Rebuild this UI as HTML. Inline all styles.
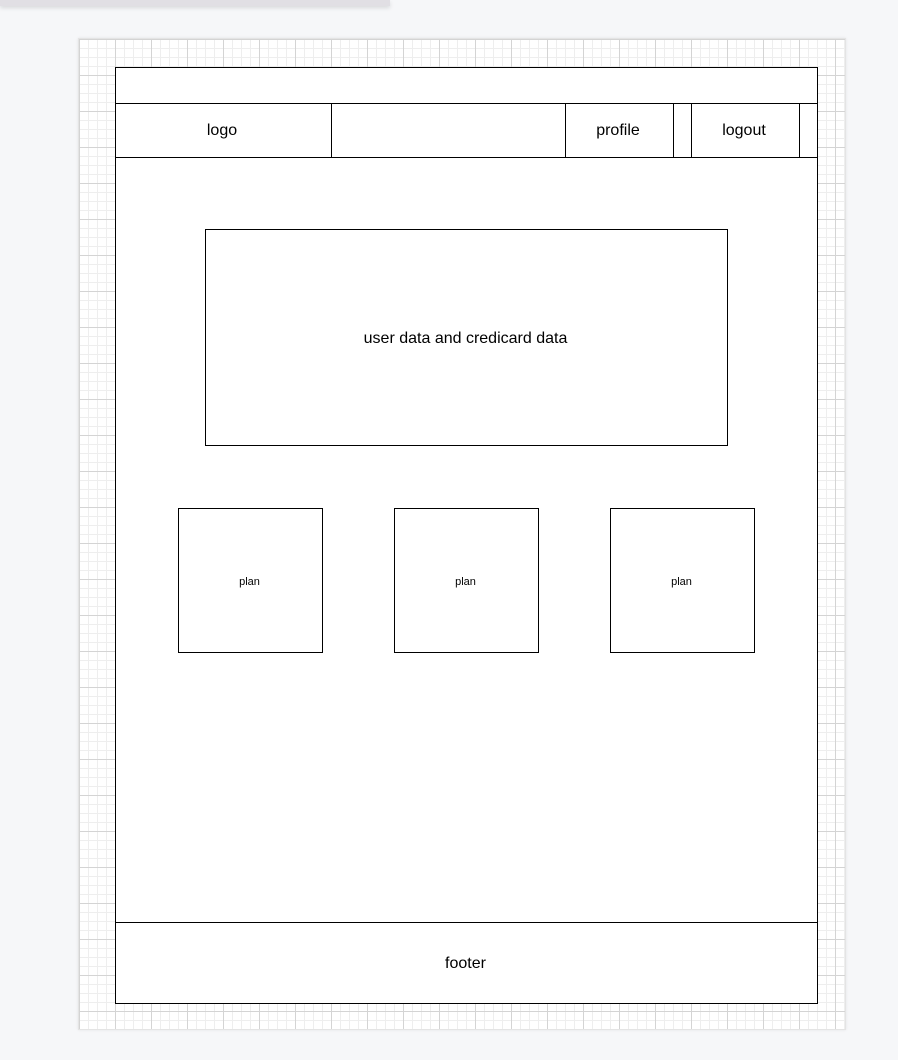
<!DOCTYPE html>
<html><head><style>
body{margin:0;width:898px;height:1060px;background:#f6f7f9;position:relative;overflow:hidden;font-family:"Liberation Sans",Arial,sans-serif;color:#000}
.a{position:absolute;box-sizing:border-box}
.topbar{left:0;top:0;width:390px;height:6px;background:#e1dfe4;box-shadow:0 2px 4px rgba(0,0,0,.12)}
.canvas{left:78px;top:38px;width:768px;height:992px;background-color:#fff;
background-image:linear-gradient(#d4d4d4 1px,transparent 1px),linear-gradient(90deg,#d4d4d4 1px,transparent 1px),linear-gradient(#eeeeee 1px,transparent 1px),linear-gradient(90deg,#eeeeee 1px,transparent 1px);
background-size:36px 36px,36px 36px,9px 9px,9px 9px;background-position:0 0,0 0,0 0,0 0;
border:1px solid #e4e4e4;box-shadow:0 0 3px rgba(0,0,0,.08)}
.b{border:1px solid #000;background:#fff}
.l{background:#000}
.t{display:flex;align-items:center;justify-content:center;font-size:16px;padding-top:2px}
</style></head><body>
<div class="a topbar"></div>
<div class="a canvas"></div>
<div class="a b" style="left:115px;top:67px;width:703px;height:937px"></div>
<div class="a l" style="left:115px;top:103px;width:703px;height:1px"></div>
<div class="a l" style="left:115px;top:157px;width:703px;height:1px"></div>
<div class="a l" style="left:115px;top:922px;width:703px;height:1px"></div>
<div class="a l" style="left:331px;top:103px;width:1px;height:55px"></div>
<div class="a l" style="left:565px;top:103px;width:1px;height:55px"></div>
<div class="a l" style="left:673px;top:103px;width:1px;height:55px"></div>
<div class="a l" style="left:691px;top:103px;width:1px;height:55px"></div>
<div class="a l" style="left:799px;top:103px;width:1px;height:55px"></div>
<div class="a t" style="left:115px;top:103px;width:214px;height:54px">logo</div>
<div class="a t" style="left:565px;top:103px;width:106px;height:54px">profile</div>
<div class="a t" style="left:691px;top:103px;width:106px;height:54px">logout</div>
<div class="a b t" style="left:205px;top:229px;width:523px;height:217px;padding-right:2px">user data and credicard data</div>
<div class="a b t" style="left:178px;top:508px;width:145px;height:145px;font-size:11px;padding-right:2px">plan</div>
<div class="a b t" style="left:394px;top:508px;width:145px;height:145px;font-size:11px;padding-right:2px">plan</div>
<div class="a b t" style="left:610px;top:508px;width:145px;height:145px;font-size:11px;padding-right:2px">plan</div>
<div class="a t" style="left:115px;top:923px;width:701px;height:80px">footer</div>
</body></html>
